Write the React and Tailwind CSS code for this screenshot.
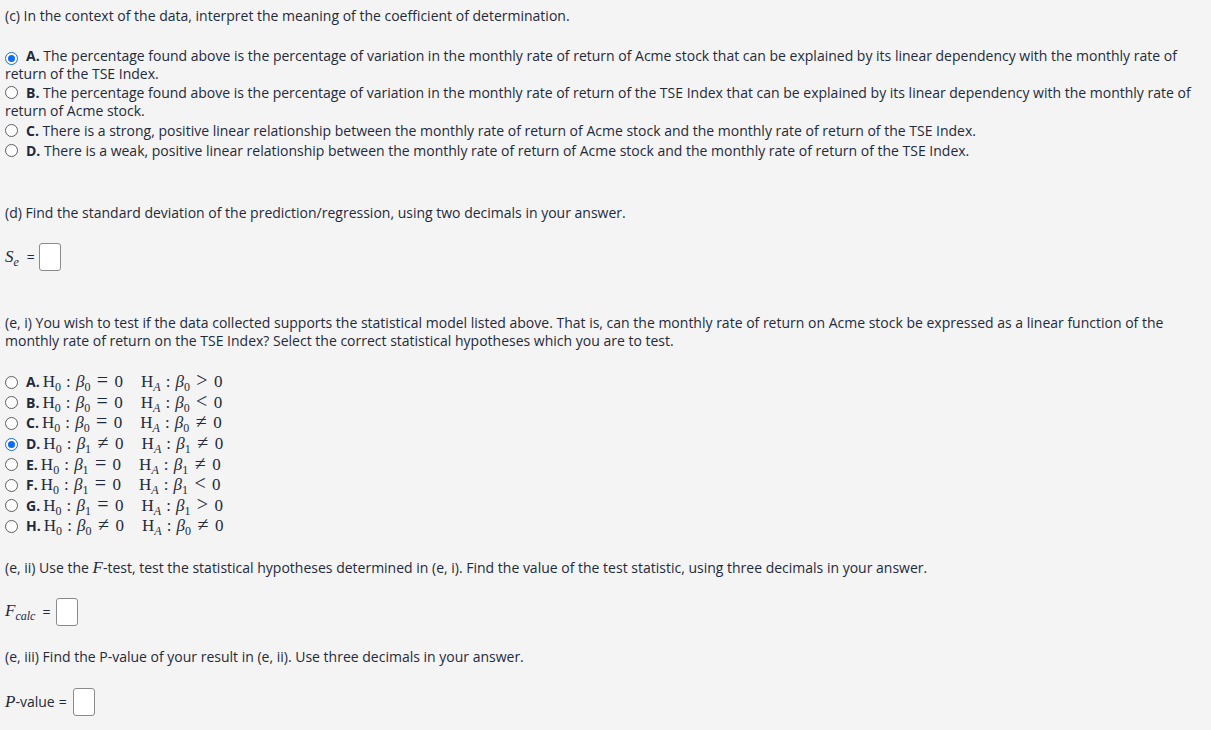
import React from "react";

const M = ({ children, className = "" }) => (
  <span className={`font-['Liberation_Serif','DejaVu_Serif',serif] text-[17px] leading-[18px] ${className}`}>{children}</span>
);
const I = ({ children }) => <span className="italic">{children}</span>;
const Colon = () => <span className="inline-block w-[15px] text-center">:</span>;
const R = ({ children }) => (
  <span className="inline-block w-[24px] text-center text-[20px] leading-[16px]">{children}</span>
);
const Sub = ({ children, it }) => (
  <span className={`relative top-[4px] text-[12px] ${it ? "italic" : ""}`}>{children}</span>
);

function Radio({ checked }) {
  return checked ? (
    <span className="inline-flex w-[13px] h-[13px] rounded-full border-[1.5px] border-[#0b6cf5] items-center justify-center shrink-0 bg-white">
      <span className="w-[7px] h-[7px] rounded-full bg-[#0b6cf5]" />
    </span>
  ) : (
    <span className="inline-block w-[13px] h-[13px] rounded-full border border-[#5e5e5e] bg-white shrink-0" />
  );
}

function Box() {
  return <span className="inline-block w-[22px] h-[28px] border border-[#8a8a8a] rounded-[3px] bg-white align-middle" />;
}

const hyps = [
  ["A.", "0", "=", "0", ">"],
  ["B.", "0", "=", "0", "<"],
  ["C.", "0", "=", "0", "≠"],
  ["D.", "1", "≠", "1", "≠"],
  ["E.", "1", "=", "1", "≠"],
  ["F.", "1", "=", "1", "<"],
  ["G.", "1", "=", "1", ">"],
  ["H.", "0", "≠", "0", "≠"],
];

function Opt({ checked, label, children, className = "" }) {
  return (
    <div className={className}>
      <span className="inline-flex align-[-1px] mr-[8px]"><Radio checked={checked} /></span>
      <b>{label}</b> {children}
    </div>
  );
}

export default function App() {
  return (
    <div className="min-h-[730px] bg-[#f4f4f4] text-[#1f2a3c] text-[14px] leading-[18px] font-['Segoe_UI','Open_Sans','Noto_Sans',sans-serif] px-[5px] pt-[7px]">
      <p>(c) In the context of the data, interpret the meaning of the coefficient of determination.</p>

      <div className="mt-[22px]">
        <Opt checked label="A.">
          The percentage found above is the percentage of variation in the monthly rate of return of Acme stock that can be explained by its linear dependency with the monthly rate of return of the TSE Index.
        </Opt>
        <Opt label="B." className="mt-[1px]">
          The percentage found above is the percentage of variation in the monthly rate of return of the TSE Index that can be explained by its linear dependency with the monthly rate of return of Acme stock.
        </Opt>
        <Opt label="C." className="mt-[2px]">
          There is a strong, positive linear relationship between the monthly rate of return of Acme stock and the monthly rate of return of the TSE Index.
        </Opt>
        <Opt label="D." className="mt-[2px]">
          There is a weak, positive linear relationship between the monthly rate of return of Acme stock and the monthly rate of return of the TSE Index.
        </Opt>
      </div>

      <p className="mt-[44px]">(d) Find the standard deviation of the prediction/regression, using two decimals in your answer.</p>

      <div className="mt-[21px] flex items-center h-[28px]">
        <M><I>S</I><Sub it>e</Sub></M>
        <span className="ml-[8px] mr-[4px]">=</span>
        <Box />
      </div>

      <p className="mt-[43px]">(e, i) You wish to test if the data collected supports the statistical model listed above. That is, can the monthly rate of return on Acme stock be expressed as a linear function of the monthly rate of return on the TSE Index? Select the correct statistical hypotheses which you are to test.</p>

      <div className="mt-[22px] flex flex-col">
        {hyps.map(([l, a, r1, b, r2], i) => (
          <div key={l} className="flex items-center h-[20.6px]">
            <Radio checked={i === 3} />
            <b className="ml-[8px] mr-[3px]">{l}</b>
            <M className="whitespace-nowrap">
              H<Sub>0</Sub><Colon /><I>β</I><Sub>{a}</Sub><R>{r1}</R>0
              <span className="inline-block w-[18px]" />
              H<Sub it>A</Sub><Colon /><I>β</I><Sub>{b}</Sub><R>{r2}</R>0
            </M>
          </div>
        ))}
      </div>

      <p className="mt-[22px]">(e, ii) Use the <M><I>F</I></M>-test, test the statistical hypotheses determined in (e, i). Find the value of the test statistic, using three decimals in your answer.</p>

      <div className="mt-[21px] flex items-center h-[28px]">
        <M><I>F</I><Sub it>calc</Sub></M>
        <span className="ml-[7px] mr-[6px]">=</span>
        <Box />
      </div>

      <p className="mt-[22px]">(e, iii) Find the P-value of your result in (e, ii). Use three decimals in your answer.</p>

      <div className="mt-[22px] flex items-center h-[28px]">
        <M><I>P</I></M>
        <span>-value</span>
        <span className="ml-[4px] mr-[6px]">=</span>
        <Box />
      </div>
    </div>
  );
}
